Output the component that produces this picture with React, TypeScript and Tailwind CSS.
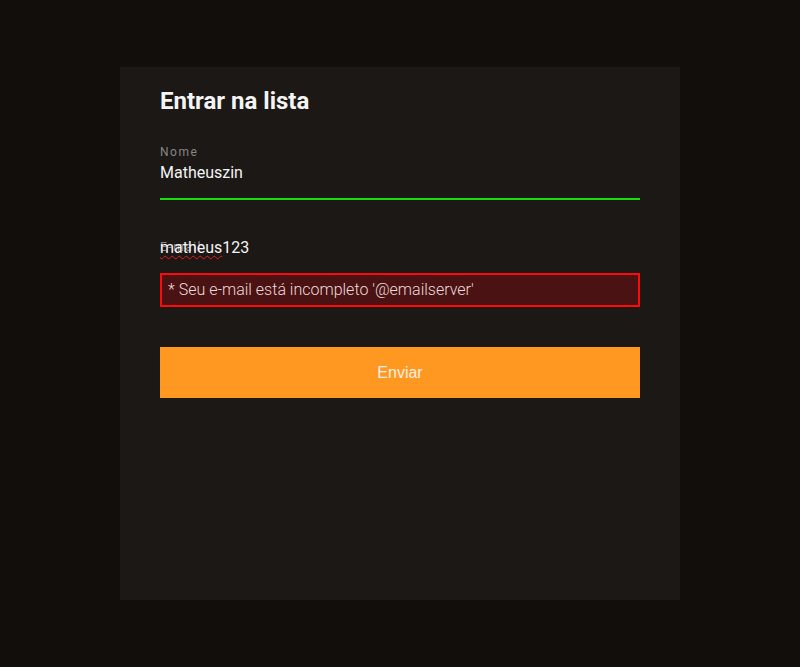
import React from 'react';

export default function App() {
  return (
    <div className="min-h-[667px] w-full bg-[#110e0c] pt-[67px]" style={{ fontFamily: 'Roboto, "Liberation Sans", sans-serif' }}>
      <div className="mx-auto flex h-[533px] w-[560px] flex-col bg-[#1b1816] px-10 pt-[18px]">
        <h1 className="text-[24px] font-bold leading-[32px] text-[#f4f4f4]">Entrar na lista</h1>

        <div className="mt-[28px] flex flex-col">
          <span className="text-[12px] leading-[14px] tracking-[1.5px] text-[#8a8684]">Nome</span>
          <span className="mt-[4px] text-[16px] leading-[20px] text-[#f4f4f4]">Matheuszin</span>
          <div className="mt-[15px] h-[2px] bg-[#16e00b]" />
        </div>

        <div className="relative mt-[38px] h-[22px]">
          <span className="absolute left-0 top-[2px] text-[12px] leading-[14px] tracking-[1.5px] text-[#8a8684]">E-mail</span>
          <span className="absolute left-0 top-0 text-[16px] leading-[20px] text-[#f4f4f4]">
            <span className="underline decoration-[#e02020] decoration-wavy decoration-1 underline-offset-2">matheus</span>123
          </span>
        </div>

        <div className="mt-[13px] flex h-[34px] items-center border-2 border-[#ff0a0a] bg-[#4a1212] px-[6px] text-[16px] font-light text-[#eadcdc]">
          * Seu e-mail está incompleto '@emailserver'
        </div>

        <button className="mt-[40px] h-[51px] w-full bg-[#ff9820] text-[16px] text-[#fbf0e4]" style={{ fontFamily: '"Liberation Sans", Arial, sans-serif' }}>
          Enviar
        </button>
      </div>
    </div>
  );
}
